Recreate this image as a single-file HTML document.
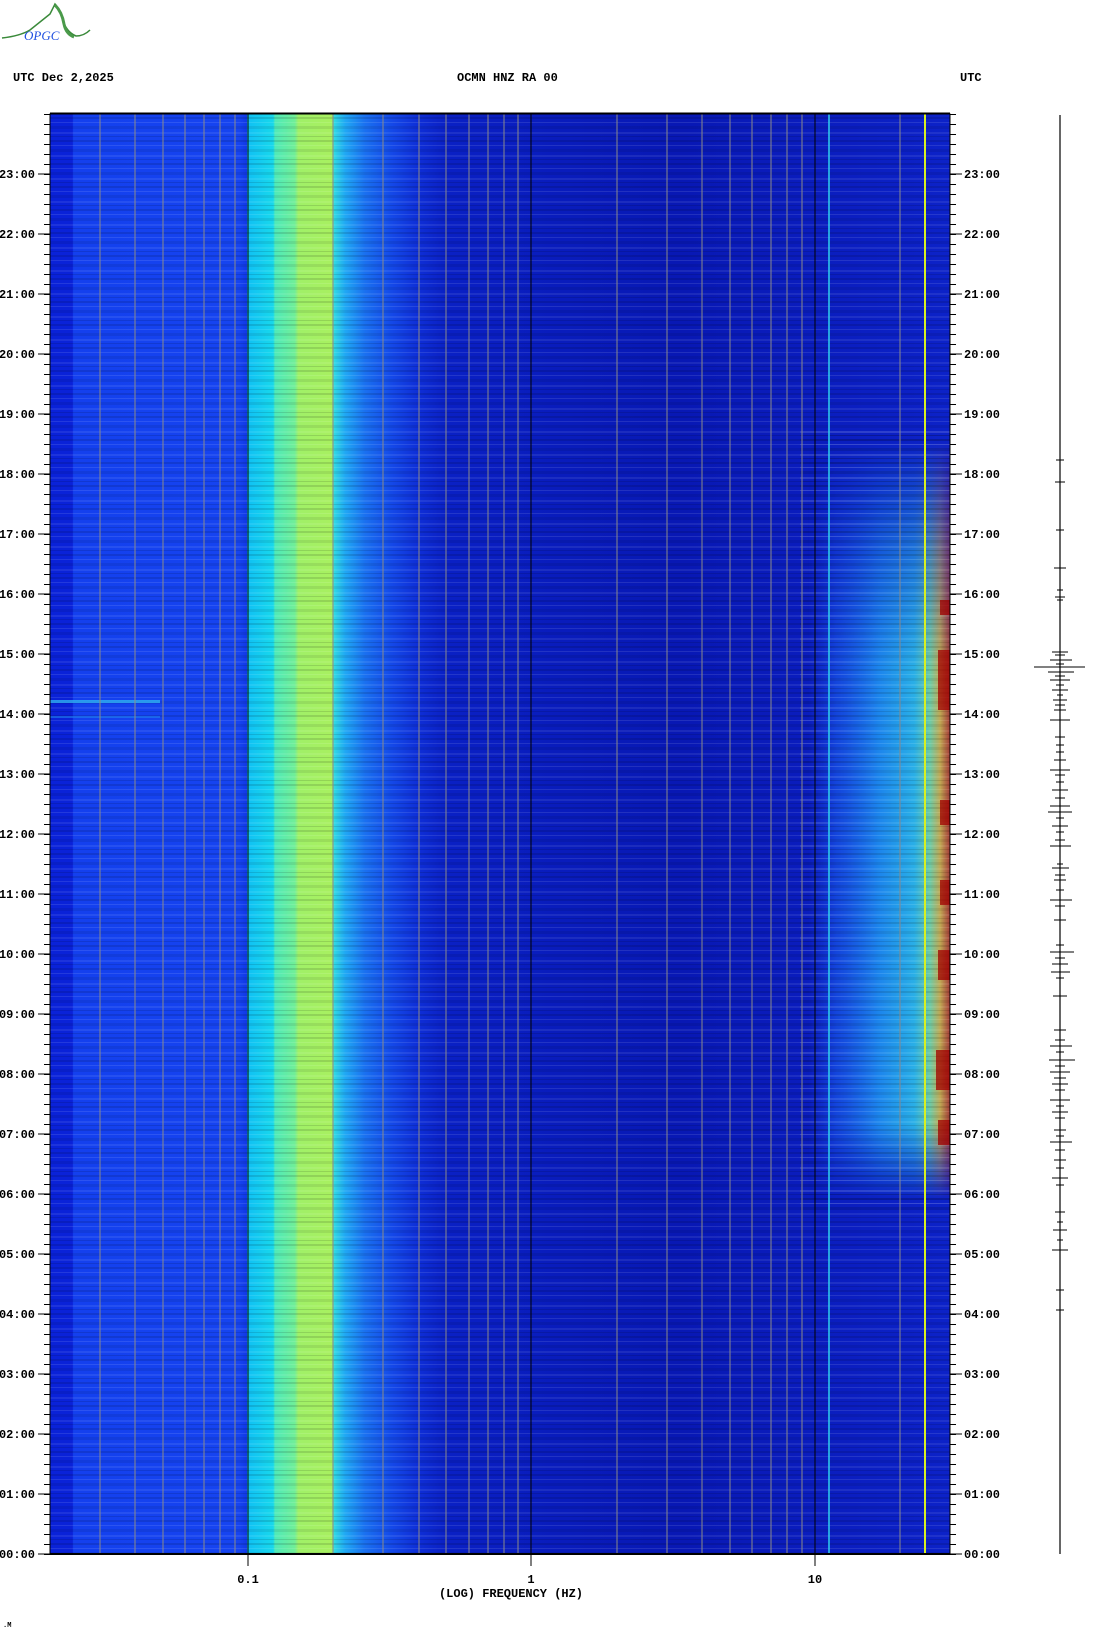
<!DOCTYPE html>
<html><head><meta charset="utf-8"><style>
html,body{margin:0;padding:0;background:#fff;width:1102px;height:1634px;overflow:hidden}
svg{display:block}
text{font-family:"Liberation Mono",monospace;font-weight:bold;font-size:12px;fill:#000}
</style></head><body>
<svg width="1102" height="1634" viewBox="0 0 1102 1634" xmlns="http://www.w3.org/2000/svg">
<defs>
<linearGradient id="cols" x1="50" x2="950" y1="0" y2="0" gradientUnits="userSpaceOnUse">
<stop offset="0" stop-color="#0a22d8"/>
<stop offset="0.025" stop-color="#0a22d8"/>
<stop offset="0.026" stop-color="#1440ee"/>
<stop offset="0.21" stop-color="#1644f0"/>
<stop offset="0.219" stop-color="#1038e6"/>
<stop offset="0.219" stop-color="#10c0f4"/>
<stop offset="0.248" stop-color="#18d8ec"/>
<stop offset="0.25" stop-color="#50eab8"/>
<stop offset="0.272" stop-color="#70ee98"/>
<stop offset="0.276" stop-color="#a0f068"/>
<stop offset="0.313" stop-color="#a8f060"/>
<stop offset="0.316" stop-color="#30d8e4"/>
<stop offset="0.328" stop-color="#20a8f4"/>
<stop offset="0.35" stop-color="#1a70f0"/>
<stop offset="0.38" stop-color="#1448e8"/>
<stop offset="0.41" stop-color="#0e2ed6"/>
<stop offset="0.44" stop-color="#0a20c4"/>
<stop offset="0.7" stop-color="#0818b4"/>
<stop offset="0.82" stop-color="#0a1cbc"/>
<stop offset="1" stop-color="#0c22c8"/>
</linearGradient>
<linearGradient id="rh" x1="808" x2="950" y1="0" y2="0" gradientUnits="userSpaceOnUse">
<stop offset="0" stop-color="#1a50f0" stop-opacity="0"/>
<stop offset="0.2" stop-color="#1a60f0" stop-opacity="0.7"/>
<stop offset="0.5" stop-color="#2098f4"/>
<stop offset="0.75" stop-color="#30c8ec"/>
<stop offset="0.86" stop-color="#80e8a0"/>
<stop offset="0.93" stop-color="#e0c040"/>
<stop offset="1" stop-color="#c04020"/>
</linearGradient>
<linearGradient id="rv" x1="0" x2="0" y1="440" y2="1200" gradientUnits="userSpaceOnUse">
<stop offset="0" stop-color="#fff" stop-opacity="0"/>
<stop offset="0.15" stop-color="#fff" stop-opacity="0.5"/>
<stop offset="0.3" stop-color="#fff" stop-opacity="0.85"/>
<stop offset="0.9" stop-color="#fff" stop-opacity="0.85"/>
<stop offset="1" stop-color="#fff" stop-opacity="0"/>
</linearGradient>
<mask id="rm"><rect x="800" y="430" width="150" height="780" fill="url(#rv)"/></mask>
<pattern id="stripes" x="0" y="0" width="900" height="23" patternUnits="userSpaceOnUse">
<rect y="2" width="900" height="2" fill="#000" opacity="0.12"/>
<rect y="7" width="900" height="1" fill="#fff" opacity="0.1"/>
<rect y="11" width="900" height="3" fill="#000" opacity="0.08"/>
<rect y="17" width="900" height="2" fill="#fff" opacity="0.08"/>
<rect y="21" width="900" height="1" fill="#000" opacity="0.12"/>
</pattern>
<pattern id="tl" x="0" y="4" width="20" height="10" patternUnits="userSpaceOnUse">
<rect x="0" y="0" width="20" height="1" fill="#000"/>
</pattern>
</defs>

<path d="M2 38 Q20 36 30 30 Q40 22 50 14 L55 4 Q60 10 62 18 Q66 32 76 36 Q84 36 90 30" fill="none" stroke="#3a8a3a" stroke-width="1.5"/>
<path d="M55 5 Q62 12 64 24 Q66 34 74 37" fill="none" stroke="#4a9a4a" stroke-width="3"/>
<text x="24" y="40" style="font-family:'Liberation Serif',serif;font-style:italic;font-weight:normal;font-size:13px;fill:#2050e0">OPGC</text>

<text x="13" y="81">UTC  Dec 2,2025</text>
<text x="457" y="81">OCMN HNZ RA 00</text>
<text x="960" y="81">UTC</text>

<rect x="50" y="114" width="900" height="1440" fill="url(#cols)"/>
<rect x="50" y="114" width="900" height="1440" fill="url(#stripes)"/>
<rect x="50" y="700" width="110" height="3" fill="#30b0f0" opacity="0.8"/>
<rect x="50" y="716" width="110" height="2" fill="#2080f0" opacity="0.6"/>
<rect x="800" y="430" width="150" height="780" fill="url(#rh)" mask="url(#rm)"/>
<rect x="800" y="430" width="150" height="780" fill="url(#stripes)" opacity="0.9"/>
<g fill="#a00000" opacity="0.75">
<rect x="938" y="650" width="12" height="60"/><rect x="936" y="1050" width="14" height="40"/><rect x="938" y="950" width="12" height="30"/><rect x="940" y="800" width="10" height="25"/><rect x="938" y="1120" width="12" height="25"/><rect x="940" y="600" width="10" height="15"/><rect x="940" y="880" width="10" height="25"/>
</g>
<g stroke="#8a8a8a" stroke-width="1">
<path d="M100 114V1554M135 114V1554M163 114V1554M185 114V1554M204 114V1554M220 114V1554M235 114V1554M333 114V1554M383 114V1554M419 114V1554M446 114V1554M469 114V1554M488 114V1554M504 114V1554M518 114V1554M617 114V1554M667 114V1554M702 114V1554M730 114V1554M752 114V1554M771 114V1554M787 114V1554M802 114V1554M900 114V1554"/>
</g>
<path d="M248 114V1554M531 114V1554M815 114V1554" stroke="#000" stroke-width="1"/>
<path d="M829 114V1554" stroke="#30d0f0" stroke-width="1.5"/>
<path d="M925 114V1554" stroke="#d8f020" stroke-width="2"/>
<rect x="50" y="114" width="900" height="1440" fill="none" stroke="#000" stroke-width="1"/>
<path d="M50 113.5H950" stroke="#000" stroke-width="2"/>
<path d="M50 1554H950" stroke="#000" stroke-width="2"/>

<rect x="44" y="114" width="6" height="1441" fill="url(#tl)"/>
<rect x="950" y="114" width="6" height="1441" fill="url(#tl)"/>
<g stroke="#000" stroke-width="1">
<path d="M38 1554H50M38 1494H50M38 1434H50M38 1374H50M38 1314H50M38 1254H50M38 1194H50M38 1134H50M38 1074H50M38 1014H50M38 954H50M38 894H50M38 834H50M38 774H50M38 714H50M38 654H50M38 594H50M38 534H50M38 474H50M38 414H50M38 354H50M38 294H50M38 234H50M38 174H50"/>
<path d="M950 1554H962M950 1494H962M950 1434H962M950 1374H962M950 1314H962M950 1254H962M950 1194H962M950 1134H962M950 1074H962M950 1014H962M950 954H962M950 894H962M950 834H962M950 774H962M950 714H962M950 654H962M950 594H962M950 534H962M950 474H962M950 414H962M950 354H962M950 294H962M950 234H962M950 174H962"/>
<path d="M248 1554V1566M531 1554V1566M815 1554V1566"/>
</g>
<g text-anchor="end">
<text x="35" y="1558">00:00</text><text x="35" y="1498">01:00</text><text x="35" y="1438">02:00</text><text x="35" y="1378">03:00</text><text x="35" y="1318">04:00</text><text x="35" y="1258">05:00</text><text x="35" y="1198">06:00</text><text x="35" y="1138">07:00</text><text x="35" y="1078">08:00</text><text x="35" y="1018">09:00</text><text x="35" y="958">10:00</text><text x="35" y="898">11:00</text><text x="35" y="838">12:00</text><text x="35" y="778">13:00</text><text x="35" y="718">14:00</text><text x="35" y="658">15:00</text><text x="35" y="598">16:00</text><text x="35" y="538">17:00</text><text x="35" y="478">18:00</text><text x="35" y="418">19:00</text><text x="35" y="358">20:00</text><text x="35" y="298">21:00</text><text x="35" y="238">22:00</text><text x="35" y="178">23:00</text>
</g>
<g>
<text x="964" y="1558">00:00</text><text x="964" y="1498">01:00</text><text x="964" y="1438">02:00</text><text x="964" y="1378">03:00</text><text x="964" y="1318">04:00</text><text x="964" y="1258">05:00</text><text x="964" y="1198">06:00</text><text x="964" y="1138">07:00</text><text x="964" y="1078">08:00</text><text x="964" y="1018">09:00</text><text x="964" y="958">10:00</text><text x="964" y="898">11:00</text><text x="964" y="838">12:00</text><text x="964" y="778">13:00</text><text x="964" y="718">14:00</text><text x="964" y="658">15:00</text><text x="964" y="598">16:00</text><text x="964" y="538">17:00</text><text x="964" y="478">18:00</text><text x="964" y="418">19:00</text><text x="964" y="358">20:00</text><text x="964" y="298">21:00</text><text x="964" y="238">22:00</text><text x="964" y="178">23:00</text>
</g>
<text x="248" y="1583" text-anchor="middle">0.1</text>
<text x="531" y="1583" text-anchor="middle">1</text>
<text x="815" y="1583" text-anchor="middle">10</text>
<text x="511" y="1597" text-anchor="middle">(LOG) FREQUENCY (HZ)</text>
<text x="3" y="1627" style="font-size:7px">.M</text>

<path d="M1060 115V1554" stroke="#000" stroke-width="1.2"/>
<g stroke="#000" stroke-width="1">
<path d="M1034 667H1085M1052 652H1068M1050 660H1072M1048 672H1074M1050 680H1070M1052 690H1068M1053 700H1067M1054 710H1066M1050 720H1070M1055 737H1065M1054 760H1066M1050 770H1070M1052 790H1068M1050 806H1070M1048 812H1072M1052 826H1068M1050 846H1071M1052 868H1069M1054 880H1066M1050 900H1072M1054 920H1066M1050 952H1074M1052 964H1068M1051 972H1070M1053 996H1067M1054 1030H1066M1050 1046H1072M1049 1060H1075M1050 1072H1070M1052 1084H1068M1050 1100H1070M1052 1112H1068M1054 1130H1066M1050 1142H1072M1054 1160H1066M1052 1178H1068M1055 1212H1065M1053 1230H1067M1052 1250H1068M1056 1290H1064M1056 1310H1064M1056 460H1064M1055 482H1065M1056 530H1064M1054 568H1066M1055 597H1065"/>
<path d="M1055 655H1065M1056 664H1064M1055 676H1065M1056 685H1064M1057 695H1063M1055 705H1065M1056 745H1064M1056 752H1064M1055 775H1065M1056 782H1064M1055 798H1065M1056 818H1064M1056 832H1064M1055 840H1065M1057 864H1063M1055 875H1065M1056 890H1064M1055 906H1065M1056 945H1064M1055 958H1065M1056 978H1064M1055 1040H1065M1056 1052H1064M1055 1066H1065M1054 1078H1066M1055 1090H1065M1056 1106H1064M1055 1118H1065M1056 1136H1064M1055 1150H1065M1056 1168H1064M1056 1185H1064M1057 1222H1063M1057 1240H1063M1057 590H1063M1057 600H1063"/>
</g>
</svg>
</body></html>
